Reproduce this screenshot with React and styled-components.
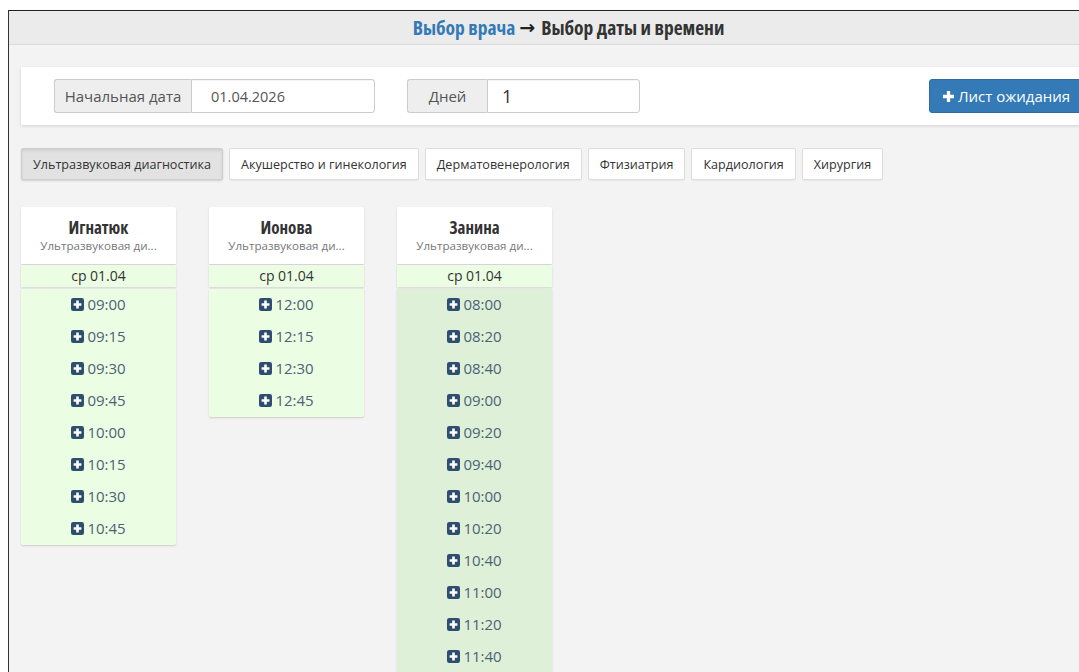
import React from "react";
import styled, { createGlobalStyle } from "styled-components";

const GlobalStyle = createGlobalStyle`
  html, body {
    margin: 0;
    padding: 0;
    background: #ffffff;
    overflow: hidden;
  }
  body {
    font-family: "Open Sans", "Liberation Sans", sans-serif;
    color: #333;
  }
  * { box-sizing: border-box; }
`;

const Page = styled.div`
  padding: 10px 0 0 8px;
  height: 672px;
  overflow: hidden;
`;

const Frame = styled.div`
  width: 1120px;
  height: 700px;
  border-top: 1px solid #222;
  border-left: 1px solid #333;
  background: #f3f3f3;
  display: flex;
  flex-direction: column;
`;

const TopBar = styled.header`
  height: 34px;
  background: #ebebeb;
  border-bottom: 1px solid #dcdcdc;
  display: flex;
  align-items: center;
  justify-content: center;
  gap: 4px;
  font-weight: 700;
  font-size: 19.5px;
  font-stretch: 75%;
`;

const StepLink = styled.span`
  color: #337ab7;
`;

const StepCurrent = styled.span`
  color: #333;
`;

const Arrow = styled.span`
  color: #222;
  font-family: "DejaVu Sans", sans-serif;
  font-weight: 700;
  font-size: 19px;
  font-stretch: 100%;
  line-height: 1;
  margin-right: 2px;
`;

const Content = styled.div`
  padding: 22px 12px 0 12px;
  display: flex;
  flex-direction: column;
`;

const FilterPanel = styled.div`
  background: #fff;
  height: 58px;
  display: flex;
  align-items: center;
  padding: 0 33px;
  box-shadow: 0 1px 3px rgba(0, 0, 0, 0.14);
`;

const InputGroup = styled.div`
  display: flex;
  height: 34px;
  margin-right: 32px;
`;

const Addon = styled.span`
  display: flex;
  align-items: center;
  justify-content: center;
  width: ${(p) => p.$w}px;
  background: #eee;
  border: 1px solid #ccc;
  border-right: none;
  border-radius: 3px 0 0 3px;
  color: #555;
  font-size: 15px;
`;

const Field = styled.div`
  display: flex;
  align-items: center;
  width: ${(p) => p.$w}px;
  padding: 0 12px 0 ${(p) => p.$pad}px;
  border: 1px solid #ccc;
  border-radius: 0 3px 3px 0;
  background: #fff;
  color: ${(p) => (p.$big ? "#333" : "#555")};
  font-size: ${(p) => (p.$big ? "18px" : "14.5px")};
  box-shadow: inset 0 1px 1px rgba(0, 0, 0, 0.04);
`;

const WaitButton = styled.button`
  margin-left: auto;
  height: 34px;
  width: 154px;
  display: flex;
  align-items: center;
  gap: 4px;
  padding: 0 8px 0 13px;
  border: 1px solid #2e6da4;
  border-radius: 3px;
  background: #337ab7;
  color: #fff;
  font-family: "Open Sans", sans-serif;
  font-size: 15px;
  white-space: nowrap;
  overflow: hidden;

  svg {
    flex-shrink: 0;
  }
`;

const Tabs = styled.nav`
  display: flex;
  gap: 6px;
  margin-top: 23px;
`;

const Tab = styled.button`
  height: 32px;
  padding: 0 11px;
  font-family: "Open Sans", sans-serif;
  font-size: 12.6px;
  color: #333;
  background: ${(p) => (p.$active ? "#e2e2e2" : "#fff")};
  border: 1px solid ${(p) => (p.$active ? "#cfcfcf" : "#ddd")};
  border-radius: 2px;
  box-shadow: ${(p) =>
    p.$active
      ? "inset 0 2px 3px rgba(0,0,0,0.08), 0 1px 2px rgba(0,0,0,0.15)"
      : "0 1px 1px rgba(0,0,0,0.05)"};
`;

const Doctors = styled.div`
  display: flex;
  align-items: flex-start;
  gap: 33px;
  margin-top: 27px;
`;

const DoctorCard = styled.section`
  width: 155px;
  display: flex;
  flex-direction: column;
`;

const DoctorHead = styled.div`
  height: 57px;
  background: #fff;
  border-radius: 2px 2px 0 0;
  box-shadow: 0 1px 2px rgba(0, 0, 0, 0.16);
  display: flex;
  flex-direction: column;
  align-items: center;
  padding-top: 11px;
`;

const DoctorName = styled.div`
  font-weight: 700;
  font-size: 17px;
  font-stretch: 75%;
  line-height: 20px;
  color: #333;
`;

const DoctorSpec = styled.div`
  font-size: 11.6px;
  line-height: 16px;
  color: #777;
`;

const DateRow = styled.div`
  margin-top: 1px;
  height: 22px;
  background: #ebfde2;
  box-shadow: 0 1px 2px rgba(0, 0, 0, 0.14);
  display: flex;
  align-items: center;
  justify-content: center;
  font-size: 14px;
  line-height: 20px;
  color: #333;
`;

const SlotList = styled.ul`
  list-style: none;
  margin: 2px 0 0;
  padding: 0;
  background: ${(p) => (p.$busy ? "#dff0d8" : "#ebfde2")};
  box-shadow: 0 1px 2px rgba(0, 0, 0, 0.16);
  border-radius: 0 0 2px 2px;
`;

const Slot = styled.li`
  height: 32px;
  display: flex;
  align-items: center;
  justify-content: center;
  gap: 3px;
  padding-bottom: 2px;
  font-size: 15px;
  color: #4b6277;
`;

const PlusSquare = () => (
  <svg width="13" height="13" viewBox="0 0 13 13" aria-hidden="true">
    <rect x="0" y="0" width="13" height="13" rx="2.2" fill="#2f4d6d" />
    <path d="M5.2 2.6h2.6v2.6h2.6v2.6H7.8v2.6H5.2V7.8H2.6V5.2h2.6z" fill="#fff" />
  </svg>
);

const PlusGlyph = () => (
  <svg width="11" height="11" viewBox="0 0 12 12" aria-hidden="true">
    <path d="M4.2 0h3.6v4.2H12v3.6H7.8V12H4.2V7.8H0V4.2h4.2z" fill="#fff" />
  </svg>
);

const specialties = [
  "Ультразвуковая диагностика",
  "Акушерство и гинекология",
  "Дерматовенерология",
  "Фтизиатрия",
  "Кардиология",
  "Хирургия",
];

const doctors = [
  {
    name: "Игнатюк",
    slots: ["09:00", "09:15", "09:30", "09:45", "10:00", "10:15", "10:30", "10:45"],
  },
  { name: "Ионова", slots: ["12:00", "12:15", "12:30", "12:45"] },
  {
    name: "Занина",
    busy: true,
    slots: [
      "08:00", "08:20", "08:40", "09:00", "09:20", "09:40",
      "10:00", "10:20", "10:40", "11:00", "11:20", "11:40",
    ],
  },
];

export default function App() {
  return (
    <>
      <GlobalStyle />
      <Page>
        <Frame>
          <TopBar>
            <StepLink>Выбор врача</StepLink>
            <Arrow>→</Arrow>
            <StepCurrent>Выбор даты и времени</StepCurrent>
          </TopBar>
          <Content>
            <FilterPanel>
              <InputGroup>
                <Addon $w={137}>Начальная дата</Addon>
                <Field $w={184} $pad={19}>01.04.2026</Field>
              </InputGroup>
              <InputGroup>
                <Addon $w={80}>Дней</Addon>
                <Field $w={153} $pad={14} $big>1</Field>
              </InputGroup>
              <WaitButton>
                <PlusGlyph />
                Лист ожидания
              </WaitButton>
            </FilterPanel>

            <Tabs>
              {specialties.map((s, i) => (
                <Tab key={s} $active={i === 0}>
                  {s}
                </Tab>
              ))}
            </Tabs>

            <Doctors>
              {doctors.map((d) => (
                <DoctorCard key={d.name}>
                  <DoctorHead>
                    <DoctorName>{d.name}</DoctorName>
                    <DoctorSpec>Ультразвуковая ди...</DoctorSpec>
                  </DoctorHead>
                  <DateRow>ср 01.04</DateRow>
                  <SlotList $busy={d.busy}>
                    {d.slots.map((t) => (
                      <Slot key={t}>
                        <PlusSquare />
                        {t}
                      </Slot>
                    ))}
                  </SlotList>
                </DoctorCard>
              ))}
            </Doctors>
          </Content>
        </Frame>
      </Page>
    </>
  );
}
